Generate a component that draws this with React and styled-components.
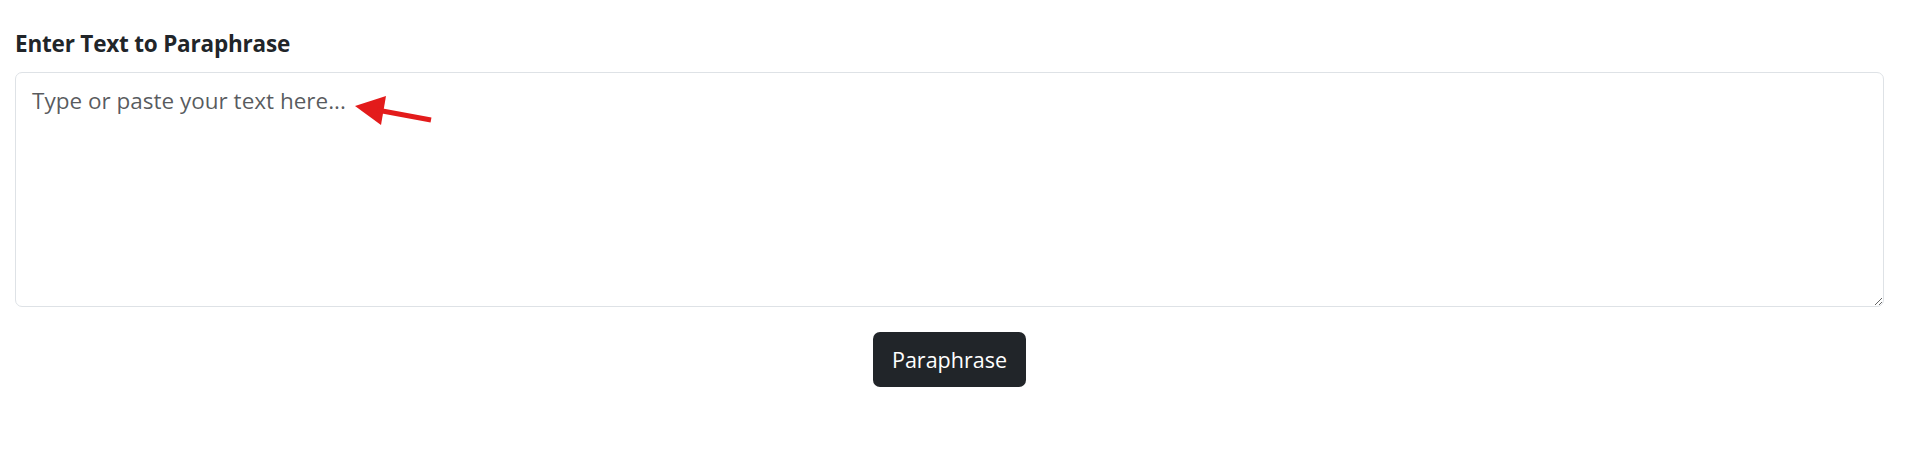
import React from 'react';
import styled, { createGlobalStyle } from 'styled-components';

const GlobalStyle = createGlobalStyle`
  body {
    margin: 0;
    background: #fff;
    font-family: "Open Sans", "Noto Sans", sans-serif;
    color: #212529;
  }
`;

const Page = styled.div`
  padding: 27px 34px 0 15px;
  display: flex;
  flex-direction: column;
`;

const Label = styled.label`
  font-size: 22.5px;
  font-weight: 700;
  line-height: 34px;
  margin-bottom: 11px;
  letter-spacing: -0.2px;
`;

const Field = styled.div`
  position: relative;
`;

const TextArea = styled.textarea`
  display: block;
  box-sizing: border-box;
  width: 100%;
  height: 235px;
  padding: 11px 16px 9px;
  border: 1px solid #dee2e6;
  border-radius: 7px;
  font-family: "Open Sans", "Noto Sans", sans-serif;
  font-size: 22.5px;
  line-height: 1.5;
  color: #212529;
  resize: vertical;
  outline: none;
  &::placeholder {
    color: rgba(33, 37, 41, 0.75);
  }
`;

const Arrow = styled.svg`
  position: absolute;
  left: 320px;
  top: 20px;
  width: 100px;
  height: 40px;
  pointer-events: none;
`;

const Actions = styled.div`
  display: flex;
  justify-content: center;
  margin-top: 25px;
`;

const Button = styled.button`
  height: 55px;
  padding: 0 19px;
  border: none;
  border-radius: 7px;
  background: #212529;
  color: #fff;
  font-family: "Open Sans", "Noto Sans", sans-serif;
  font-size: 21.5px;
  cursor: pointer;
`;

const App = () => (
  <>
    <GlobalStyle />
    <Page>
      <Label htmlFor="source">Enter Text to Paraphrase</Label>
      <Field>
        <TextArea id="source" placeholder="Type or paste your text here..." />
        <Arrow viewBox="0 0 100 40">
          <polygon points="20,14 51,4 46,33" fill="#e31b1b" />
          <line x1="42" y1="18" x2="96" y2="28" stroke="#e31b1b" strokeWidth="5" />
        </Arrow>
      </Field>
      <Actions>
        <Button>Paraphrase</Button>
      </Actions>
    </Page>
  </>
);

export default App;
